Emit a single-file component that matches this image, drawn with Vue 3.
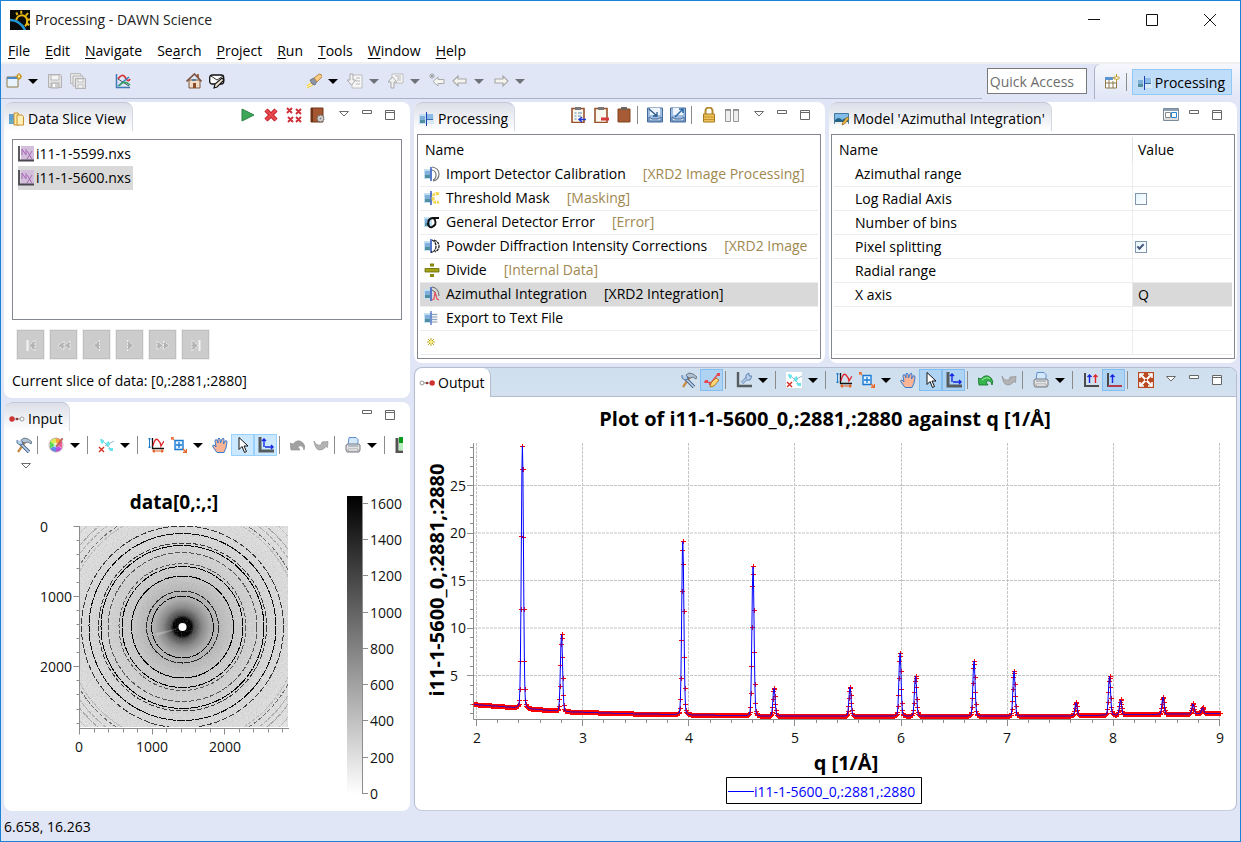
<script setup>
import { h, ref } from 'vue'

const base = '<path d="M0 3h8v10H0z" fill="#c4dff2"/><path d="M1 5h5v7H1z" fill="#7fb0da"/><path d="M1 9h5v3H1z" fill="#4f8f9f"/>'
const wrench = '<path d="M9 5 2 15" stroke="#c78a45" stroke-width="2.200"/><path d="m5 3 3-2 4 1 4 3-1 2-3-2-3 1-3-1z" fill="#b4c3d3" stroke="#4f6175" stroke-width=".8"/><path d="m4 6 9 9" stroke="#3f5f8a" stroke-width="3.400"/><path d="m4 6 9 9" stroke="#c3d6ec" stroke-width="1.600"/><path d="M1 3v3l3 2 3-1-1-3" fill="#b7cfea" stroke="#3f5f8a" stroke-width=".8"/>'
const axes = '<path d="M2 0v14h14" fill="none" stroke="#555d60" stroke-width="3"/>'

const icons = {
  app: '<path d="M0 0h16v16H0z" fill="#0a0a0a"/><path d="M5 8.500A4.500 4.500 0 0 1 13 6q2 4-1 7" fill="none" stroke="#e9b913" stroke-width="1.600"/><path d="M6 4 5 2M9 3V.5M12.500 4.500l2-2M14 7.500h2M13.500 11l2 1" stroke="#e9b913" stroke-width="1.600"/><path d="M0 8q8 0 12 8" fill="none" stroke="#2196d6" stroke-width="2"/>',
  wizard: '<path d="M1 4h11v10H1z" fill="#e8f3fb" stroke="#8b7a45"/><path d="M1 4h11v2H1z" fill="#4b8ac9"/><path d="M13 0v7M9.500 3.500h7M11 1.500l4 4M15 1.500l-4 4" stroke="#c59a2d" stroke-width="1.300"/><path d="M12 2.500h2v2h-2z" fill="#fff2a6"/>',
  save: '<path d="M1.500 1.500h12l1 1v12h-13z" fill="#e2e2e2" stroke="#b1b1b1"/><path d="M4 2h8v5H4z" fill="#f5f5f5" stroke="#b8b8b8"/><path d="M4 10h8v5H4z" fill="#cfcfcf" stroke="#b1b1b1"/><path d="M6 11h2v3H6z" fill="#fff"/>',
  saveall: '<path d="M.5.5h10v10H.5z" fill="#e6e6e6" stroke="#bbb"/><path d="M3 3h10v10H3z" fill="#e6e6e6" stroke="#b7b7b7"/><path d="M5.500 5.500h10v10h-10z" fill="#e2e2e2" stroke="#b1b1b1"/><path d="M8 6h5v3H8zM8 12h5v3H8z" fill="#f8f8f8" stroke="#bbb" stroke-width=".8"/>',
  chart: '<path d="M1.500 1v13.500H15" fill="none" stroke="#3e78b5" stroke-width="1.500"/><path d="M3 6q4-6 7-2 3 6 5 2" fill="none" stroke="#d8343a" stroke-width="1.800"/><path d="M3 13 14 4" stroke="#3b86cb" stroke-width="1.600"/><path d="m3 6 11 7" stroke="#45525c"/><path d="M4 13q5-7 11-1" fill="none" stroke="#2fa35e" stroke-width="1.500"/>',
  home: '<path d="M3 7h11v8H3z" fill="#f3dcc6" stroke="#7b5b45"/><path d="M11 1h2v4h-2z" fill="#a06a48"/><path d="m.5 8.500 8-7.500 7 7.500" fill="none" stroke="#7c5440" stroke-width="1.700"/><path d="M7 10h3v5H7z" fill="#8c4a27"/><path d="M6 6h4v2H6z" fill="#5d7f9c"/>',
  mail: '<rect x=".7" y="2" width="14" height="9" rx="2.500" fill="#fff" stroke="#111" stroke-width="1.300"/><path d="m2 3 6 4 6-4" fill="none" stroke="#333"/><path d="m5 15 1-4 7-6 2 2-7 7z" fill="#efe5d2" stroke="#111" stroke-width="1.100"/>',
  torch: '<path d="m0 15 5-8 4 4z" fill="#fff9cf"/><path d="m1 13 4-3M1 15l6-3" stroke="#f4cf50" stroke-width="1.300"/><path d="m4 7 4-2 3 3-2 4-3-1z" fill="#8d95a5" stroke="#626a78" stroke-width=".8"/><path d="m8 5 5-4 3 1v2l-5 5z" fill="#f6c984" stroke="#ad7936" stroke-width=".8"/>',
  nextann: '<path d="M5 2h10v13H5z" fill="#f7f7f7" stroke="#bdbdbd"/><path d="M9 5h4M9 8h4M9 11h4" stroke="#b5b5b5"/><path d="M3 1h3v6h3l-4.500 5L0 7h3z" fill="#f2f2f2" stroke="#aaa"/>',
  prevann: '<path d="M4 1h11v9H4z" fill="#f7f7f7" stroke="#bdbdbd"/><path d="M7 3h6M9 5h4M9 7h4" stroke="#b5b5b5"/><path d="M3 15h3V9h3L4.500 4 0 9h3z" fill="#f2f2f2" stroke="#aaa"/>',
  lastedit: '<path d="M4 8.500 9 4v2.500h6v4H9V13z" fill="#f5f5ef" stroke="#aaa"/><path d="M3 0v6M0 3h6M1 1l4 4M5 1 1 5" stroke="#989898" stroke-width=".8"/>',
  back: '<path d="m1 8 5-5v3h8v4H6v3z" fill="#f5f5ef" stroke="#a6a6a6" stroke-width="1.100"/>',
  fwd: '<path d="m15 8-5-5v3H2v4h8v3z" fill="#f5f5ef" stroke="#a6a6a6" stroke-width="1.100"/>',
  openpersp: '<path d="M1.500 4h11v10h-11z" fill="#fff" stroke="#8a7a4d"/><path d="M1 3h8v3H1z" fill="#5b93ce"/><path d="M1 9h11M5 6v8M9 7v7" stroke="#8a7a4d"/><path d="M12.500 0v8M8.500 4h8M10.500 2l4 4M14.500 2l-4 4" stroke="#c59a2d"/><path d="M11.500 3h2v2h-2z" fill="#fff6c8"/>',
  proc: base + '<path d="M8 3h7v10H8z" fill="#d8e9f6"/><path d="M8 3h6v5H8z" fill="#8bbbe4"/><path d="M7.500 1v14" stroke="#1b3fb5"/><path d="M8 8.500h6" stroke="#3b6da8"/>',
  slice: '<path d="M0 3h7v10H0z" fill="#5f9ed3"/><path d="M0 9h7v3H0z" fill="#67adc0"/><path d="M5 2h4l1 2v10H5z" fill="#ffe79c" stroke="#c89232"/><path d="M8 4h5l1.500 1.500V14H8z" fill="#fff0b8" stroke="#c89232"/>',
  run: '<path d="M2 2v12l12-6z" fill="#3ca757" stroke="#2d8244"/>',
  del: '<path d="m3 3 10 10M13 3 3 13" stroke="#b81e27" stroke-width="4.500"/><path d="m3 3 10 10M13 3 3 13" stroke="#e8474d" stroke-width="2.500"/>',
  delall: '<path d="m1 1 5 5M6 1 1 6M10 2l5 5M15 2l-5 5M2 10l5 5M7 10l-5 5M10 10l5 5M15 10l-5 5" stroke="#d02e36" stroke-width="1.900"/>',
  book: '<path d="M2 1h12v14H2z" fill="#a35630" stroke="#723718"/><path d="M2 1h2v14H2z" fill="#6e3316"/><circle cx="11.500" cy="11.500" r="3.200" fill="#ddd" stroke="#737373" stroke-width="1.500" stroke-dasharray="1.500 1"/><circle cx="11.500" cy="11.500" r="1" fill="#777"/>',
  menu: '<path d="M3.500 4.500h9L8 9z" fill="#fff" stroke="#6b6b6b"/>',
  min: '<path d="M3.500 3.500h9v3h-9z" fill="#fff" stroke="#666"/>',
  max: '<path d="M3.500 3.500h9v9h-9z" fill="#fff" stroke="#666"/><path d="M3 5.500h10" stroke="#666"/>',
  nx: '<path d="M3 0h13v14H3z" fill="#d3bfdc"/><path d="M1 0v14.500h15" fill="none" stroke="#4b4650" stroke-width="1.800"/><path d="M4 9V3l4 6V3M9 5l5 8M14 5l-5 8" fill="none" stroke="#a768b4"/>',
  clipadd: '<path d="M2 1.500h12v14H2z" fill="#faf7ee" stroke="#99502b" stroke-width="1.600"/><path d="M5 0h6v3H5z" fill="#777"/><path d="M4.500 6h2M4.500 9h2M4.500 12h2M8 6h4M8 9h3" stroke="#5b8fb4"/><path d="M16 12.500H9m3-2.500-3 2.500 3 2.500" fill="none" stroke="#1c3bd4" stroke-width="1.500"/>',
  cliprem: '<path d="M2 1.500h12v14H2z" fill="#faf7ee" stroke="#99502b" stroke-width="1.600"/><path d="M5 0h6v3H5z" fill="#777"/><path d="M8 10.500h8v3H8z" fill="#d63b3b"/>',
  clip: '<path d="M2 2h12v13H2z" fill="#a65b34" stroke="#814220"/><path d="M5 0h6v3H5z" fill="#6d625d"/>',
  imp: '<path d="M.5 1h15v14H.5z" fill="#9ebcdf" stroke="#406b9b"/><path d="M3 1h10v7H3z" fill="#edf4fb"/><path d="m2 2 8 7M10 5v4H6" fill="none" stroke="#28568b" stroke-width="1.300"/><path d="M2 10l3 2h6l3-2v4H2z" fill="#cfdff1" stroke="#406b9b"/>',
  exp: '<path d="M.5 1h15v14H.5z" fill="#9ebcdf" stroke="#406b9b"/><path d="M3 1h10v7H3z" fill="#edf4fb"/><path d="m5 10 8-8M9 2h4v4" fill="none" stroke="#2768a4" stroke-width="1.500"/><path d="M2 10l3 2h6l3-2v4H2z" fill="#cfdff1" stroke="#406b9b"/>',
  lock: '<path d="M4.500 8V4a3.500 3.500 0 0 1 7 0v4" fill="none" stroke="#b38b2d" stroke-width="2"/><path d="M2.500 7h11v8h-11z" fill="#ecc25a" stroke="#a87b21"/><path d="M3 10h10M3 12.500h10" stroke="#c4932d"/>',
  split: '<path d="M1.500 2.500h5v12h-5zM9.500 2.500h5v12h-5z" fill="#eee" stroke="#999"/><path d="M1 3h6M9 3h6" stroke="#888" stroke-width="1.500"/>',
  columns: '<path d="M.5 1.500h15v12H.5z" fill="#fff" stroke="#7a8a99"/><path d="M1 2h14v2H1z" fill="#8ba0b4"/><path d="M2.500 5.500h5v5h-5z" fill="#fff" stroke="#888"/><path d="M8.500 5.500h5v5h-5z" fill="#fff" stroke="#2485d2"/><path d="M1 12h14" stroke="#bbb"/>',
  model: '<path d="M.5 2.500h14v10H.5z" fill="#82bde9" stroke="#41789d"/><path d="M1 9q4-4 7 0 3-3 6-1v4H1z" fill="#256385"/><path d="M1 11h13v2H1z" fill="#eee"/><path d="m8 14 1-3 4-5 2 1.500-4.500 5.500z" fill="#eab742" stroke="#896320" stroke-width=".7"/>',
  calib: base + '<path d="M7 1v14" stroke="#1b3fb5" stroke-width="1.300"/><path d="M8 1q7 1 7 7t-6 7M8 4q4 1 4 5t-3 5" fill="none" stroke="#777" stroke-width="1.200"/>',
  mask: base + '<path d="M7 1v14" stroke="#1b3fb5" stroke-width="1.300"/><path d="M15 4q-6-2-6 4t6 4" fill="none" stroke="#f4d44f" stroke-width="3" stroke-dasharray="3 1"/>',
  sigma: base + '<path d="M8 4q-4 1-4 6 1 4 4 3 5-2 3-7-1-2-3-2h7" fill="none" stroke="#111" stroke-width="1.900"/>',
  powder: base + '<path d="M7 1v14" stroke="#1b3fb5" stroke-width="1.300"/><path d="M8 2q4 2 4 6t-3 6h-2M10 2q5 2 5 6t-4 6" fill="none" stroke="#222" stroke-width="1.300" stroke-dasharray="3 .7"/>',
  divide: '<path d="M1 6.500h14v3.500H1z" fill="#a4a413" stroke="#66660a" stroke-width=".8"/><path d="M6 1.500h4v3H6zM6 12h4v3H6z" fill="#87870d"/>',
  azim: base + '<path d="M7 1v14" stroke="#1b3fb5" stroke-width="1.300"/><path d="M8 1q7 1 7 9M8 4q4 1 4 6" fill="none" stroke="#666"/><path d="m8 14 2-1 1-7 2 7 2 1" fill="none" stroke="#e25560" stroke-width="1.200"/>',
  export: base + '<path d="M7 1v14" stroke="#1b3fb5"/><path d="M8 3h6v10H8z" fill="#eee"/><path d="M8 4.500h5M8 7h5M8 9.500h5M8 12h5" stroke="#8ba6c2"/>',
  star: '<path d="M7 4v8M3 8h8M4 5l6 6M10 5l-6 6" stroke="#b9a41d"/><circle cx="7" cy="8" r="1.500" fill="#fff27c"/>',
  input: '<path d="M3 8h8" stroke="#999"/><circle cx="3" cy="8" r="2.700" fill="#cf3434"/><circle cx="8" cy="8" r="1.300" fill="#8c3636"/><circle cx="13" cy="8" r="2" fill="#fff" stroke="#999"/>',
  output: '<path d="M4 8h8" stroke="#999"/><circle cx="3" cy="8" r="2" fill="#fff" stroke="#999"/><circle cx="8" cy="8" r="1.300" fill="#8c3636"/><circle cx="13.200" cy="8" r="2.700" fill="#cf3434"/>',
  tools: wrench,
  wheel: '<path d="M8 8V1a7 7 0 0 1 6 3.500z" fill="#ff9d3b"/><path d="m8 8 6-3.500V11z" fill="#f35b9e"/><path d="m8 8 6 3.500A7 7 0 0 1 8 15z" fill="#b94ee1"/><path d="M8 8v7a7 7 0 0 1-6-3.500z" fill="#5e89ef"/><path d="m8 8-6 3.500V4.500z" fill="#55d957"/><path d="M8 8 2 4.500A7 7 0 0 1 8 1z" fill="#d7ec53"/><circle cx="8" cy="8" r="7" fill="none" stroke="#b9a0a0" stroke-width=".8"/><circle cx="8" cy="8" r="2.500" fill="#fff" opacity=".6"/><path d="m8 9 6-8 1 1-6 8z" fill="#e65f61" stroke="#8e5a3f" stroke-width=".6"/>',
  regions: '<path d="M0 0h16v16H0z" fill="#fff"/><path d="m7 9 9-5M3 2l10 10" stroke="#9bb8cc"/><path d="m2 2 4 1-1 4-2-1zM8 6l3-2 1 4-3 2zM10 11h5v3h-3z" fill="#67e5ec"/><path d="m1 10 5 5M6 10l-5 5" stroke="#d42f23" stroke-width="1.400"/>',
  rescale: '<path d="M1.500 1v10M0 2.500 1.500 1 3 2.500M0 9.500 1.500 11 3 9.500" fill="none" stroke="#1878c9"/><path d="M4.500 1v10.500H16" fill="none" stroke="#111" stroke-width="1.300"/><path d="M5 9q2-9 5-6t3 6l3-5" fill="none" stroke="#e0282e" stroke-width="1.300"/><path d="M5 14h10M6.500 12.500 5 14l1.500 1.500M13.500 12.500 15 14l-1.500 1.500" fill="none" stroke="#e35a1f" stroke-width="1.200"/>',
  zoom: '<path d="M4 3.500h8v9H4z" fill="#e2f2ff" stroke="#1979d0" stroke-width="1.400"/><path d="M8 5v6M5 8h6" stroke="#1979d0" stroke-width="1.300"/><path d="M3 3 0 0M0 3V0h3M12 12l3.500 3.500M15.500 12v3.500H12" fill="none" stroke="#e8662b" stroke-width="1.300"/>',
  hand: '<path d="M5 15.500 1 10q-1-2 1-2l2 2-1-6q0-2 2-1l1 3V2q1-2 2 0l.5 4L10 2q2-2 2 1l-.5 4L13 4q2-1 2 1l-1 6-2 4.500z" fill="#f8b494" stroke="#3a7bd0" stroke-width="1"/>',
  cursor: '<path d="M4 .5v12l3-3 2.500 6 2-1-2.500-5.500h4z" fill="#fff" stroke="#111"/>',
  axes: axes + '<path d="M6 10V2M4 4l2-2 2 2M7 10h8m-2-2 2 2-2 2" fill="none" stroke="#1528e0" stroke-width="1.400"/>',
  undog: '<path d="M1 13 0 6l3 1q5-6 10-1 3 3 1 7-1-5-5-4l-1 1 2 3z" fill="#a2a2a2" stroke="#8b8b8b" stroke-width=".6"/>',
  redog: '<path d="M1 4q2 5 7 4l1-3 6-.5-.5 6-1.500-1q-3 4-7 3.500-4-1-5-9z" fill="#b3b3b3" stroke="#888" stroke-width=".6"/>',
  undo: '<path d="M1 13 0 6l3 1q5-6 10-1 3 3 1 7-1-5-5-4l-1 1 2 3z" fill="#35b64a" stroke="#176d2b" stroke-width=".8"/><path d="M4 8q5-4 8-1" fill="none" stroke="#9ff5a6"/>',
  printer: '<path d="M4 .5h7l2 2V8H3z" fill="#d3e8fd" stroke="#608fcb"/><path d="m1 8 2-1h10l2 1v5l-1 2H2l-1-2z" fill="#e3e3e3" stroke="#747980"/><path d="M3 12h10v2H3z" fill="#fff" stroke="#858585" stroke-width=".6"/><path d="M3 9h10" stroke="#8295a8"/>',
  green: '<path d="M2 1v14h14" fill="none" stroke="#555" stroke-width="3"/><path d="M4 0h12v6H4z" fill="#089a18"/><path d="M4 6h12v7H4z" fill="#b8f0bd"/>',
  line: '<path d="M0 10h3l4 1 7-9" fill="none" stroke="#e44c55" stroke-width="1.400"/><path d="M1 8h3v3H1zM5 10h3v3H5zM13 1h3v3h-3z" fill="#e24b55"/><path d="m6 15 1-4 5-5 3 2-5 6z" fill="#ffd67a" stroke="#b57923"/>',
  axconf: '<path d="M2 0v14h14" fill="none" stroke="#555d60" stroke-width="2.400"/><path d="m6 11 5-5" stroke="#6386b4" stroke-width="3"/><path d="m6 11 5-5" stroke="#bdd1ef" stroke-width="1.400"/><path d="M10 7V3l3-2v3h3l-2 4h-3" fill="#bdd1ef" stroke="#6285b5"/>',
  twoup: '<path d="M2 1v13h14" fill="none" stroke="#4b4b4b" stroke-width="2"/><path d="M6.500 11V3M4.500 5l2-2 2 2" fill="none" stroke="#1725dd" stroke-width="1.400"/><path d="M12.500 11V3M10.500 5l2-2 2 2" fill="none" stroke="#e2252d" stroke-width="1.400"/>',
  oneup: '<path d="M2 1v14" stroke="#4b4b4b" stroke-width="2"/><path d="M2 14h14" stroke="#b23a4b" stroke-width="2"/><path d="M6.500 11V3M4.500 5l2-2 2 2" fill="none" stroke="#1725dd" stroke-width="1.400"/>',
  expand: '<path d="M0 0h16v16H0z" fill="#b84a23"/><path d="m2 2 12 12M14 2 2 14" stroke="#fff" stroke-width="2"/><path d="M2 6V2h4M10 2h4v4M14 10v4h-4M6 14H2v-4" fill="none" stroke="#fff" stroke-width="1.600"/><path d="M7 7h2v2H7z" fill="#b84a23"/>',
  first: '<path d="M4.500 3v11" stroke="#f2f2f2" stroke-width="2"/><path d="M12 3v11L6 8.500z" fill="#b3b3b3" stroke="#eee" stroke-dasharray="2 1"/>',
  rew: '<path d="M8 4v9L2 8.500zM14 4v9L8.500 8.500z" fill="#b3b3b3" stroke="#eee" stroke-dasharray="2 1"/>',
  prev: '<path d="M10.500 3v11L5 8.500z" fill="#b3b3b3" stroke="#eee" stroke-dasharray="2 1"/>',
  next: '<path d="M5.500 3v11L11 8.500z" fill="#b3b3b3" stroke="#eee" stroke-dasharray="2 1"/>',
  ffwd: '<path d="M2 4v9l6-4.500zM8.500 4v9L14 8.500z" fill="#b3b3b3" stroke="#eee" stroke-dasharray="2 1"/>',
  last: '<path d="M11.500 3v11" stroke="#f2f2f2" stroke-width="2"/><path d="M4 3v11l6-5.500z" fill="#b3b3b3" stroke="#eee" stroke-dasharray="2 1"/>'
}

const Icon = (p) => h('svg', { class: 'icon', viewBox: '0 0 16 16', 'aria-hidden': 'true', innerHTML: icons[p.name] })
Icon.props = ['name']

// Tokens: "|" separator, "v" drop-down arrow, "v-" muted arrow, trailing "*" pressed.
const Strip = (p) =>
  h('div', { class: 'strip', role: 'toolbar' }, p.items.split(' ').map((t) => {
    if (t === '|') return h('i', { class: 'sep' })
    if (t[0] === 'v' && t.length < 3) return h('button', { class: ['drop', { muted: t === 'v-' }], type: 'button', 'aria-label': 'More' })
    const name = t.replace('*', '')
    return h('button', { class: ['tool', { on: t.endsWith('*') }], type: 'button', 'aria-label': name }, [h(Icon, { name })])
  }))
Strip.props = ['items']

const menus = [['', 'F', 'ile'], ['', 'E', 'dit'], ['', 'N', 'avigate'], ['Se', 'a', 'rch'], ['', 'P', 'roject'], ['', 'R', 'un'], ['', 'T', 'ools'], ['', 'W', 'indow'], ['', 'H', 'elp']]
const files = ['i11-1-5599.nxs', 'i11-1-5600.nxs']
const steps = [
  ['calib', 'Import Detector Calibration', '[XRD2 Image Processing]'],
  ['mask', 'Threshold Mask', '[Masking]'],
  ['sigma', 'General Detector Error', '[Error]'],
  ['powder', 'Powder Diffraction Intensity Corrections', '[XRD2 Image'],
  ['divide', 'Divide', '[Internal Data]'],
  ['azim', 'Azimuthal Integration', '[XRD2 Integration]'],
  ['export', 'Export to Text File', ''],
  ['star', '', '']
]
const logAxis = ref(false)
const splitting = ref(true)

// Detector image: radius, opacity, dash pattern
const rings = [
  [31, .95, '9 1'], [36, .8, '6 1'], [51, 1, '12 1'], [60.5, 1, '9 1'], [63.5, .6, '4 2'], [74.5, .6, '5 2'], [81.5, 1, '10 1'], [84, .75, '5 2'],
  [93.500, .95, '8 1'], [101, .75, '6 2'], [117, .15, '4 1'], [120, .5, '4 2'], [126, .2, '4 1'], [131, .25, '4 1'], [139, .15, '4 1']
]
const minor = (n) => Array.from({ length: n }, (_, i) => i)

// Diffraction pattern
const X = (q) => 476.5 + (q - 2) * 106.15
const Y = (v) => 723 - v * 9.5
const peaks = [[522.4, 262], [561.5, 77], [682.800, 173], [753, 149], [774, 28], [850, 29], [900, 63], [915.500, 40], [974, 55], [1014, 45], [1076, 13], [1109.500, 39], [1120.500, 15], [1163, 17], [1193, 10], [1202.500, 6]]
const ground = (x) => {
  const k = [[474, 704.5], [522, 708], [562, 711.500], [620, 713.500], [700, 715], [760, 716], [1060, 716], [1140, 714.500], [1220, 713.500]]
  const i = Math.max(1, k.findIndex((p) => p[0] >= x))
  const [a, b] = [k[i - 1], k[i]]
  return a[1] + (b[1] - a[1]) * (x - a[0]) / (b[0] - a[0])
}
const samples = []
for (let x = 474.4; x < 1220; x += .5) {
  const up = peaks.reduce((s, [c, a]) => s + a * Math.exp(-((x - c) ** 2) / 2.2) + a * .02 * Math.exp(-((x - c) ** 2) / 18), 0)
  samples.push([x, Math.round((ground(x) - up) * 2) / 2])
}
for (const [c, a] of peaks) {
  const near = samples.reduce((m, s) => (Math.abs(s[0] - c) < Math.abs(m[0] - c) ? s : m))
  near[0] = c
  near[1] = ground(c) - a
}
const trace = 'M' + samples.map((s) => s[0].toFixed(1) + ' ' + s[1].toFixed(1)).join('L')
const crosses = samples.map(([x, y]) => `M${Math.round(x) - 2} ${Math.floor(y) + .5}h5M${Math.round(x) + .5} ${Math.floor(y) - 2}v5`).join('')
</script>

<template>
  <div class="app">
    <header class="title">
      <Icon name="app" class="logo" />
      <span class="caption">Processing - DAWN Science</span>
      <button type="button" class="win" aria-label="Minimize"><svg viewBox="0 0 12 12"><path d="M0 5.500h12" /></svg></button>
      <button type="button" class="win" aria-label="Maximize"><svg viewBox="0 0 12 12"><path d="M.5.5h11v11H.5z" /></svg></button>
      <button type="button" class="win" aria-label="Close"><svg viewBox="0 0 12 12"><path d="m0 0 12 12M12 0 0 12" /></svg></button>
    </header>
    <nav class="menubar">
      <button v-for="m in menus" :key="m[2]" type="button">{{ m[0] }}<u>{{ m[1] }}</u>{{ m[2] }}</button>
    </nav>
    <div class="coolbar">
      <div class="actions">
        <Strip items="wizard v save saveall" />
        <Strip class="g-chart" items="chart" />
        <Strip class="g-home" items="home mail" />
        <Strip class="g-nav" items="torch v nextann v- prevann v- lastedit back v- fwd v-" />
      </div>
      <input class="quick" type="text" placeholder="Quick Access" aria-label="Quick Access">
      <div class="perspectives">
        <Strip items="openpersp" />
        <i class="sep"></i>
        <button type="button" class="persp"><Icon name="proc" />Processing</button>
      </div>
    </div>

    <main class="work">
      <div class="side">
        <section class="view">
          <div class="head">
            <h2 class="tab"><Icon name="slice" />Data Slice View</h2>
            <Strip items="run del delall book" />
            <Strip class="ctl" items="menu min max" />
          </div>
          <ul class="files">
            <li v-for="(f, i) in files" :key="f" :class="{ sel: i === 1 }"><Icon name="nx" />{{ f }}</li>
          </ul>
          <div class="player">
            <button v-for="n in ['first', 'rew', 'prev', 'next', 'ffwd', 'last']" :key="n" type="button" :aria-label="n" disabled><Icon :name="n" /></button>
          </div>
          <p class="slice">Current slice of data: [0,:2881,:2880]</p>
        </section>

        <section class="view grow">
          <div class="head short">
            <h2 class="tab"><Icon name="input" />Input</h2>
            <Strip class="ctl" items="min max" />
          </div>
          <div class="row">
            <Strip items="tools | wheel v | regions v | rescale zoom v hand cursor* axes* | undog redog | printer v | green" />
            <Strip items="menu" />
          </div>
          <svg class="plot" viewBox="4 478 406 326">
            <defs>
              <radialGradient id="halo" gradientUnits="userSpaceOnUse" cx="182.500" cy="627" r="140">
                <stop offset="0" stop-color="#000" /><stop offset=".065" stop-color="#000" />
                <stop offset=".085" stop-color="#4c4c4c" /><stop offset=".14" stop-color="#8a8a8a" />
                <stop offset=".2" stop-color="#b0b0b0" /><stop offset=".38" stop-color="#cdcdcd" />
                <stop offset=".65" stop-color="#dadada" /><stop offset="1" stop-color="#e4e4e4" />
              </radialGradient>
              <linearGradient id="ramp" x1="0" y1="0" x2="0" y2="1"><stop offset="0" /><stop offset="1" stop-color="#fff" /></linearGradient>
              <filter id="grain" x="0" y="0" width="100%" height="100%">
                <feTurbulence type="fractalNoise" baseFrequency=".8" numOctaves="2" seed="4" />
                <feColorMatrix values="0 0 0 0 .3  0 0 0 0 .3  0 0 0 0 .3  .7 0 0 0 -.3" />
              </filter>
              <clipPath id="frame"><path d="M80 526h208v201H80z" /></clipPath>
            </defs>
            <text class="ptitle small" x="174" y="509">data[0,:,:]</text>
            <g clip-path="url(#frame)">
              <path d="M80 526h208v201H80z" fill="url(#halo)" />
              <path d="M80 526h208v201H80z" filter="url(#grain)" />
              <path d="m180 628-23 8-1-3z" fill="#fff" opacity=".25" />
              <circle v-for="r in rings" :key="r[0]" class="ring" cx="182.500" cy="627" :r="r[0]" :opacity="r[1]" :stroke-dasharray="r[2]" />
              <circle cx="182.500" cy="627" r="4" fill="#fff" />
            </g>
            <path class="axis" d="M79.500 526v202.500M79 728.500h210" />
            <path v-for="i in minor(15)" :key="'y' + i" class="axis" :d="`M79.500 ${Math.round(526 + i * 14.04) + .5}h${i % 5 ? -3 : -6}`" />
            <path v-for="i in minor(15)" :key="'x' + i" class="axis" :d="`M${Math.round(79 + i * 14.5) + .5} 728.500v${i % 5 ? 4 : 6}`" />
            <text x="40" y="532">0</text><text x="40" y="602">1000</text><text x="40" y="672">2000</text>
            <g class="mid"><text x="79" y="752">0</text><text x="152" y="752">1000</text><text x="225" y="752">2000</text></g>
            <path d="M347 496h16v298h-16z" fill="url(#ramp)" />
            <path class="axis" d="M362.500 496v298" />
            <g v-for="i in minor(9)" :key="'r' + i">
              <path class="axis" :d="`M363 ${Math.round(793 - i * 36.300) + .5}h5`" />
              <text x="370" :y="Math.round(799 - i * 36.300)">{{ i * 200 }}</text>
            </g>
          </svg>
        </section>
      </div>

      <div class="main">
        <div class="tops">
          <section class="view">
            <div class="head">
              <h2 class="tab"><Icon name="proc" />Processing</h2>
              <Strip items="clipadd cliprem clip | imp exp | lock split" />
              <Strip class="ctl" items="menu min max" />
            </div>
            <div class="box">
              <table class="steps">
                <thead><tr><th>Name</th></tr></thead>
                <tbody>
                  <tr v-for="(s, i) in steps" :key="i" :class="{ sel: i === 5 }">
                    <td><div class="cell"><Icon :name="s[0]" />{{ s[1] }}<em>{{ s[2] }}</em></div></td>
                  </tr>
                </tbody>
              </table>
            </div>
          </section>
          <section class="view">
            <div class="head">
              <h2 class="tab"><Icon name="model" />Model 'Azimuthal Integration'</h2>
              <Strip class="ctl" items="columns min max" />
            </div>
            <div class="box wide">
              <table class="props">
                <thead><tr><th>Name</th><th class="val">Value</th></tr></thead>
                <tbody>
                  <tr><td>Azimuthal range</td><td></td></tr>
                  <tr><td><label for="log">Log Radial Axis</label></td><td><input id="log" v-model="logAxis" type="checkbox"></td></tr>
                  <tr><td>Number of bins</td><td></td></tr>
                  <tr><td><label for="pix">Pixel splitting</label></td><td><input id="pix" v-model="splitting" type="checkbox"></td></tr>
                  <tr><td>Radial range</td><td></td></tr>
                  <tr><td>X axis</td><td class="chosen">Q</td></tr>
                  <tr><td></td><td></td></tr>
                  <tr><td></td><td></td></tr>
                </tbody>
              </table>
            </div>
          </section>
        </div>

        <section class="view active grow">
          <div class="head">
            <h2 class="tab"><Icon name="output" />Output</h2>
            <Strip items="tools line* | axconf v | regions v | rescale zoom v hand cursor* axes* | undo redog | printer v | twoup oneup* | expand" />
            <Strip class="ctl" items="menu min max" />
          </div>
          <svg class="plot" viewBox="415 397 821 413">
            <text class="ptitle" x="825" y="426">Plot of i11-1-5600_0,:2881,:2880 against q [1/Å]</text>
            <text class="ptitle" transform="translate(444 580) rotate(-90)">i11-1-5600_0,:2881,:2880</text>
            <g class="grid">
              <path v-for="i in minor(8)" :key="'gx' + i" :d="`M${Math.floor(X(i + 2)) + .5} 443v276`" />
              <path v-for="i in [5, 10, 15, 20, 25]" :key="'gy' + i" :d="`M474 ${Y(i)}h746`" />
            </g>
            <path class="axis" d="M473.500 443v276.500h746.500" />
            <path v-for="i in minor(29)" :key="'ty' + i" class="axis" :d="`M473 ${Math.floor(Y(i + 1)) + .5}h${(i + 1) % 5 ? -3 : -6}`" />
            <path v-for="i in minor(36)" :key="'tx' + i" class="axis" :d="`M${Math.floor(X(2 + i * .2)) + .5} 720v${i % 5 ? 3 : 6}`" />
            <g class="end"><text v-for="i in [5, 10, 15, 20, 25]" :key="i" :x="i === 5 ? 458 : 466" :y="Math.round(Y(i)) + 5">{{ i }}</text></g>
            <g class="mid"><text v-for="i in minor(8)" :key="i" :x="Math.round(X(i + 2))" y="743">{{ i + 2 }}</text></g>
            <path :d="crosses" fill="none" stroke="#f00" shape-rendering="crispEdges" />
            <path :d="trace" fill="none" stroke="#00f" />
            <text class="ptitle" x="846" y="770">q [1/Å]</text>
            <path d="M726.500 777.500h195v26h-195z" fill="#fff" stroke="#000" />
            <path d="M728 791.500h26" stroke="#00f" />
            <text class="legend" x="754" y="797">i11-1-5600_0,:2881,:2880</text>
          </svg>
        </section>
      </div>
    </main>
    <footer class="status">6.658, 16.263</footer>
  </div>
</template>

<style scoped>
.app {
  box-sizing: border-box;
  min-height: 100vh;
  display: flex;
  flex-direction: column;
  border: 1px solid #1883d7;
  background: #e0e6f6;
  color: #000;
  font: 14px/20px "Open Sans", "Noto Sans", sans-serif;
}
.app :deep(button) { font: inherit; color: inherit; background: none; border: 0; padding: 0; margin: 0; }
.icon, .app :deep(.icon) { width: 16px; height: 16px; flex: none; fill: none; }

.title { display: flex; align-items: center; height: 37px; padding-right: 1px; background: #fff; }
.title .logo { width: 20px; height: 20px; margin: 0 5px 0 9px; }
.caption { flex: 1; color: #222; }
.title .win { width: 58px; height: 36px; display: grid; place-items: center; }
.win svg { width: 12px; height: 12px; fill: none; stroke: #111; stroke-width: 1; }

.menubar { display: flex; gap: 15px; box-sizing: border-box; height: 26px; padding: 2px 7px 0; background: #fff; align-items: center; border-bottom: 2px solid #f0f0f0; }
.menubar u { text-underline-offset: 2px; }

.coolbar { display: flex; height: 35px; align-items: stretch; }
.actions { flex: 1; display: flex; align-items: center; padding-left: 1px; border-bottom: 1px solid #abb1c6; }
.g-chart { margin-left: 22px; }
.g-home { margin-left: 48px; }
.g-nav { margin-left: 74px; }
.actions :deep(.drop) { width: 19px; }
.quick { box-sizing: border-box; width: 100px; height: 26px; margin: 4px 7px 0 5px; padding: 0 2px; border: 1px solid #7a7a7a; background: #fff; font: inherit; }
.quick::placeholder { color: #6d6d6d; opacity: 1; }
.perspectives { display: flex; align-items: center; padding: 0 8px 0 6px; border-left: 1px solid #abb1c6; border-radius: 6px 0 0 0; background: linear-gradient(#f6f7fc, #e0e6f6); }
.app .persp { display: flex; align-items: center; gap: 2px; height: 26px; padding: 2px 6px 0 4px; border: 1px solid #90c8f6; background: #bfdcf8; box-sizing: border-box; }

.app :deep(.strip) { display: flex; align-items: center; flex: none; }
.app :deep(.tool) { width: 23px; height: 22px; display: grid; place-items: center; flex: none; }
.app :deep(.tool.on) { background: #cce8ff; box-shadow: inset 0 0 0 1px #99d1ff; }
.app :deep(.drop) { width: 18px; height: 22px; flex: none; }
.app :deep(.drop)::before { content: ""; display: block; margin-left: 3px; width: 0; border: 5px solid transparent; border-top-color: #000; border-bottom: 0; }
.app :deep(.drop.muted)::before { border-top-color: #6f7278; }
.sep, .app :deep(.sep) { width: 1px; height: 18px; margin: 0 5px 0 2px; background: #8b8b8b; flex: none; }

.work { flex: 1; display: grid; grid-template-columns: 406fr 823fr; gap: 4px; padding: 3px 3px 0; }
.side, .main { display: flex; flex-direction: column; gap: 4px; min-width: 0; }
.tops { display: grid; grid-template-columns: 411fr 408fr; gap: 4px; }
.view { background: #fff; border-radius: 8px; min-width: 0; overflow: hidden; }
.grow { flex: 1; display: flex; flex-direction: column; }
.head { display: flex; align-items: flex-start; height: 31px; padding-right: 9px; }
.head.short { height: 32px; }
.head :deep(.strip) { height: 26px; }
.head .ctl { margin-left: 4px; }
.ctl :deep(.tool) { height: 18px; }
.tab { display: flex; align-items: center; gap: 3px; height: 29px; margin: 0 auto 0 0; padding: 3px 6px 0 5px; box-sizing: border-box; border-radius: 8px 8px 0 0; border-top: 1px solid #c3c7d6; border-right: 1px solid #d5d8e2; background: linear-gradient(#dcdfe9, #fff); font-size: 14px; font-weight: 400; white-space: nowrap; }

.files { list-style: none; box-sizing: border-box; height: 181px; margin: 6px 8px 0; padding: 2px 5px; border: 1px solid #828790; }
.files li { display: flex; align-items: center; gap: 2px; width: max-content; height: 24px; padding-right: 2px; }
.files .sel { background: #d9d9d9; }
.player { display: flex; gap: 6px; margin: 10px 13px 0; }
.app .player button { width: 27px; height: 29px; display: grid; place-items: center; background: #ccc; border: 1px solid #bfbfbf; box-shadow: 0 0 0 1px #efefef; box-sizing: border-box; }
.slice { margin: 12px 8px 7px; }

.row { display: flex; flex-wrap: wrap; overflow: hidden; margin: 0 7px 0 8px; height: 44px; }
.row .strip { height: 22px; }
.row .strip:first-child { width: 391px; overflow: hidden; }
.row .strip:last-child { margin-left: 2px; }
.row :deep(.sep) { margin-right: 6px; }

.plot { display: block; width: 100%; font: 14px "Open Sans", "Noto Sans", sans-serif; }
.plot text { fill: #111; }
.plot .ptitle { font-size: 20px; font-weight: 700; text-anchor: middle; fill: #000; }
.plot .small { font-size: 19px; }
.plot .legend { fill: #00f; }
.mid { text-anchor: middle; }
.end { text-anchor: end; }
.axis { stroke: #8c8c8c; fill: none; }
.grid path { stroke: #c4c4c4; stroke-dasharray: 3 1; }
.ring { fill: none; stroke: #000; stroke-width: 1; shape-rendering: crispEdges; }

.box { margin: 1px 4px 4px 3px; height: 225px; box-sizing: border-box; border: 1px solid #828790; padding: 2px; overflow: hidden; }
.box.wide { margin: 1px 2px 4px 2px; }
.box table { width: 100%; border-collapse: collapse; table-layout: fixed; }
.box th { height: 24px; padding: 1px 0 0 5px; text-align: left; font-weight: 400; }
.box td { height: 24px; padding: 0 0 0 4px; border-bottom: 1px solid #ececec; box-sizing: border-box; white-space: nowrap; overflow: hidden; }
.steps .cell { display: flex; align-items: center; gap: 6px; height: 22px; overflow: hidden; }
.steps em { font-style: normal; color: #a08850; margin-left: 11px; }
.steps .sel { background: #d9d9d9; }
.steps .sel em { color: #000; }
.props td { padding-top: 1px; }
.props td:first-child { padding-left: 21px; }
.props .val { width: 94px; border-left: 1px solid #e2e2e2; }
.props td:last-child { border-left: 1px solid #ececec; padding-left: 2px; }
.props td.chosen { background: #d9d9d9; padding-left: 5px; }
.props input { appearance: none; display: block; width: 12px; height: 12px; margin: 0; border: 1px solid #8195ad; background: linear-gradient(135deg, #e3f4fc, #fff); box-sizing: border-box; }
.props input:checked::after { content: ""; display: block; width: 7px; height: 4px; margin: 2px 1px; border: solid #46597a; border-width: 0 0 2px 2px; transform: rotate(-45deg); box-sizing: border-box; }

.active { border: 1px solid #b4bccf; border-bottom-color: #c6ccdc; box-sizing: border-box; }
.active .head { height: 29px; padding-right: 8px; background: linear-gradient(#cfdfee, #d3e1ee); border-bottom: 1px solid #b4bccf; box-sizing: border-box; }
.active .head .strip { height: 24px; }
.active .head .ctl { margin-left: 2px; }
.active :deep(.sep) { margin-right: 6px; }
.active .tab { padding: 1px 5px 0 4px; background: #fff; border-top: 0; border-right: 1px solid #b4bccf; }
.active :deep(.tool.on) { background: #aed3f3; box-shadow: inset 0 0 0 1px #84bdf0; }

.status { height: 30px; padding: 6px 3px 0; box-sizing: border-box; }
</style>

<style>
body { margin: 0; }
</style>
